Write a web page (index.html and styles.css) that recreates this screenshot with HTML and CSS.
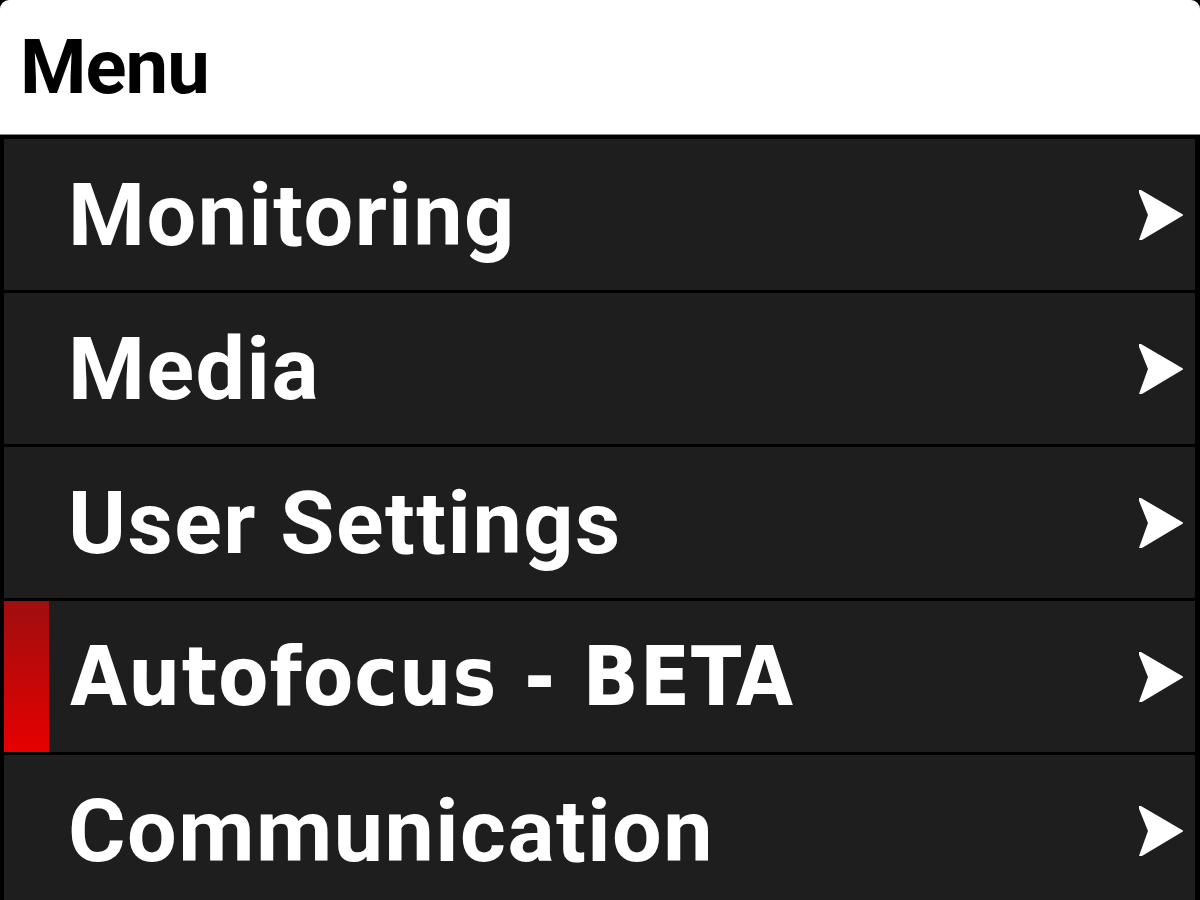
FILE: index.html
```html
<!DOCTYPE html>
<html>
<head>
<meta charset="utf-8">
<link rel="stylesheet" href="styles.css">
</head>
<body>
<div class="screen">
  <div class="header"><span class="title">Menu</span></div>
  <div class="list">
    <div class="row">
      <span class="label">Monitoring</span>
      <svg class="chev" viewBox="0 0 44 50"><path d="M0 0 L43 25 L1 50 L10 25 Z" fill="#fff" stroke="#fff" stroke-width="2" stroke-linejoin="round"/></svg>
    </div>
    <div class="row">
      <span class="label">Media</span>
      <svg class="chev" viewBox="0 0 44 50"><path d="M0 0 L43 25 L1 50 L10 25 Z" fill="#fff" stroke="#fff" stroke-width="2" stroke-linejoin="round"/></svg>
    </div>
    <div class="row">
      <span class="label">User Settings</span>
      <svg class="chev" viewBox="0 0 44 50"><path d="M0 0 L43 25 L1 50 L10 25 Z" fill="#fff" stroke="#fff" stroke-width="2" stroke-linejoin="round"/></svg>
    </div>
    <div class="row active">
      <span class="marker"></span>
      <span class="label beta">Autofocus - BETA</span>
      <svg class="chev" viewBox="0 0 44 50"><path d="M0 0 L43 25 L1 50 L10 25 Z" fill="#fff" stroke="#fff" stroke-width="2" stroke-linejoin="round"/></svg>
    </div>
    <div class="row">
      <span class="label">Communication</span>
      <svg class="chev" viewBox="0 0 44 50"><path d="M0 0 L43 25 L1 50 L10 25 Z" fill="#fff" stroke="#fff" stroke-width="2" stroke-linejoin="round"/></svg>
    </div>
  </div>
</div>
</body>
</html>
```
FILE: styles.css
```css
html, body {
  margin: 0;
  padding: 0;
  background: #000;
}
.screen {
  width: 1200px;
  height: 900px;
  overflow: hidden;
  background: #000;
}
.header {
  height: 134px;
  background: #fff;
  border-radius: 9px 9px 0 0;
  border-bottom: 1px solid #888;
  display: flex;
  align-items: center;
  padding-left: 20px;
}
.title {
  font-family: Roboto, "Liberation Sans", sans-serif;
  font-weight: 700;
  font-size: 76px;
  color: #000;
  letter-spacing: -1px;
}
.list {
  display: flex;
  flex-direction: column;
  gap: 3px;
  padding: 4px 5px 0 4px;
}
.row {
  height: 151px;
  flex: none;
  background: #1e1e1e;
  display: flex;
  align-items: center;
}
.label {
  margin-left: 64px;
  font-family: Roboto, "Liberation Sans", sans-serif;
  font-weight: 700;
  font-size: 88px;
  letter-spacing: 1.5px;
  color: #fff;
  white-space: nowrap;
}
.marker {
  width: 45px;
  align-self: stretch;
  background: linear-gradient(to bottom, #a00e0e, #e60000);
}
.row.active .label {
  margin-left: 21px;
}
.label.beta {
  font-family: "DejaVu Sans Condensed", "DejaVu Sans", sans-serif;
  font-stretch: condensed;
  font-size: 82px;
  letter-spacing: 1px;
}
.chev {
  margin-left: auto;
  margin-right: 12px;
  width: 44px;
  height: 50px;
}
```
